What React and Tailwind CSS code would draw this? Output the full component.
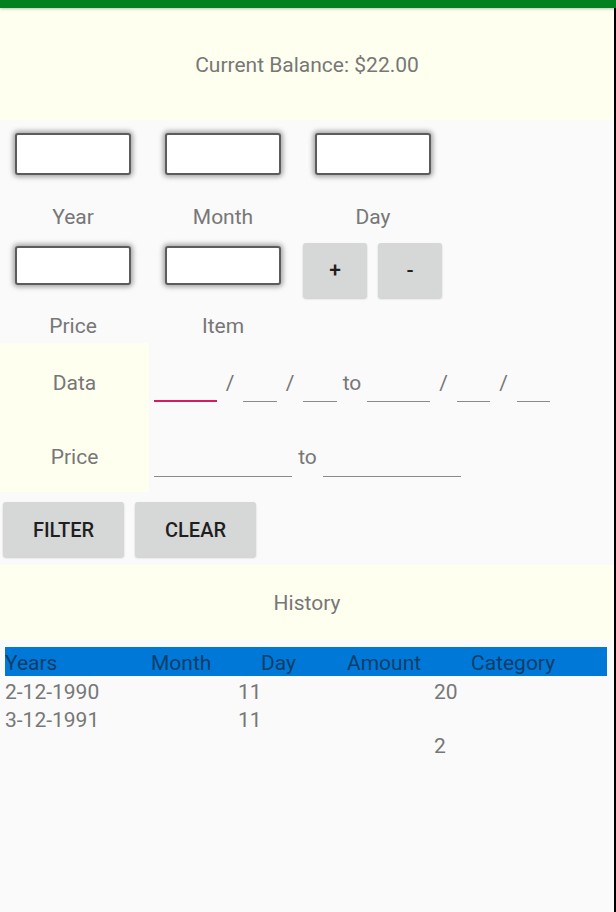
import React from "react";

function Box({ h }) {
  return (
    <div
      className={`w-[116px] ${h} bg-white border-2 border-[#5c5c5c] rounded-[3px] shadow-[0_0_5px_2px_rgba(0,0,0,0.35)]`}
    />
  );
}

function Line({ w, pink }) {
  return pink ? (
    <div className={`${w} h-[2px] mt-[57px] bg-[#d81b60]`} />
  ) : (
    <div className={`${w} h-px mt-[58px] bg-[#8a8a8a]`} />
  );
}

function Sep({ w, children }) {
  return (
    <div className={`${w} mt-[28px] leading-[24px] text-center text-[21px] text-[#777777]`}>
      {children}
    </div>
  );
}

export default function App() {
  return (
    <div className="w-[616px] h-[912px] bg-[#fafafa] font-['Roboto',_sans-serif] flex flex-col overflow-hidden">
      <div className="h-2 bg-[#03801f] relative z-10 shadow-[0_1px_3px_rgba(0,0,0,0.25)]" />
      <div className="flex flex-1">
        <div className="w-[614px] flex flex-col">
          {/* Header */}
          <div className="h-[112px] pt-[3px] bg-[#fffff0] flex items-center justify-center text-[21px] text-[#777777]">
            Current Balance: $22.00
          </div>

          {/* Row 1 */}
          <div className="flex gap-[34px] pl-[15px] pt-[13px]">
            {["Year", "Month", "Day"].map((l) => (
              <div key={l} className="flex flex-col w-[116px]">
                <Box h="h-[42px]" />
                <div className="mt-[30px] leading-[24px] text-center text-[21px] text-[#777777]">{l}</div>
              </div>
            ))}
          </div>

          {/* Row 2 */}
          <div className="flex items-start pl-[15px] mt-[14px]">
            <div className="flex flex-col w-[116px] mt-[3px]">
              <Box h="h-[39px]" />
              <div className="mt-[29px] leading-[24px] text-center text-[21px] text-[#777777]">Price</div>
            </div>
            <div className="flex flex-col w-[116px] mt-[3px] ml-[34px]">
              <Box h="h-[39px]" />
              <div className="mt-[29px] leading-[24px] text-center text-[21px] text-[#777777]">Item</div>
            </div>
            <button className="ml-[22px] w-[64px] h-[55px] bg-[#d6d7d7] rounded-[3px] shadow-[0_1px_2px_rgba(0,0,0,0.2)] text-[21px] font-medium text-[#1f1f1f] flex items-center justify-center">
              +
            </button>
            <button className="ml-[11px] w-[64px] h-[55px] bg-[#d6d7d7] rounded-[3px] shadow-[0_1px_2px_rgba(0,0,0,0.2)] text-[21px] font-medium text-[#1f1f1f] flex items-center justify-center">
              -
            </button>
          </div>

          {/* Filter section */}
          <div className="mt-[5px] flex flex-col">
            <div className="flex h-[74px]">
              <div className="w-[149px] bg-[#fffff0] pt-[28px] leading-[24px] text-center text-[21px] text-[#777777]">
                Data
              </div>
              <div className="flex items-start pl-[5px]">
                <Line w="w-[63px]" pink />
                <Sep w="w-[26px]">/</Sep>
                <Line w="w-[34px]" />
                <Sep w="w-[26px]">/</Sep>
                <Line w="w-[34px]" />
                <Sep w="w-[30px]">to</Sep>
                <Line w="w-[63px]" />
                <Sep w="w-[27px]">/</Sep>
                <Line w="w-[33px]" />
                <Sep w="w-[27px]">/</Sep>
                <Line w="w-[33px]" />
              </div>
            </div>
            <div className="flex h-[75px]">
              <div className="w-[149px] bg-[#fffff0] pt-[28px] leading-[24px] text-center text-[21px] text-[#777777]">
                Price
              </div>
              <div className="flex items-start pl-[5px]">
                <div className="w-[138px] h-px mt-[59px] bg-[#8a8a8a]" />
                <Sep w="w-[31px]">to</Sep>
                <div className="w-[138px] h-px mt-[59px] bg-[#8a8a8a]" />
              </div>
            </div>
          </div>

          {/* Filter buttons */}
          <div className="flex gap-[11px] pl-[3px] mt-[10px]">
            <button className="w-[121px] h-[55px] bg-[#d6d7d7] rounded-[3px] shadow-[0_1px_2px_rgba(0,0,0,0.2)] text-[20px] font-medium text-[#1f1f1f]">
              FILTER
            </button>
            <button className="w-[121px] h-[55px] bg-[#d6d7d7] rounded-[3px] shadow-[0_1px_2px_rgba(0,0,0,0.2)] text-[20px] font-medium text-[#1f1f1f]">
              CLEAR
            </button>
          </div>

          {/* History */}
          <div className="mt-[8px] h-[75px] pt-[3px] bg-[#fffff0] flex items-center justify-center text-[21px] text-[#777777]">
            History
          </div>

          {/* Table */}
          <div className="mt-[7px] ml-[5px] w-[602px] h-[29px] bg-[#0078d7] flex leading-[29px] pt-[2px] text-[21px] text-[#0f3e6a]">
            <div className="w-[146px]">Years</div>
            <div className="w-[110px]">Month</div>
            <div className="w-[86px]">Day</div>
            <div className="w-[124px]">Amount</div>
            <div>Category</div>
          </div>
          <div className="ml-[5px] mt-[2px] flex flex-col text-[21px] text-[#777777]">
            <div className="flex leading-[28px]">
              <div className="w-[233px]">2-12-1990</div>
              <div className="w-[196px]">11</div>
              <div>20</div>
            </div>
            <div className="flex leading-[28px]">
              <div className="w-[233px]">3-12-1991</div>
              <div className="w-[196px]">11</div>
            </div>
            <div className="flex leading-[24px]">
              <div className="w-[429px]" />
              <div>2</div>
            </div>
          </div>
        </div>
        <div className="w-[2px] bg-black" />
      </div>
    </div>
  );
}
